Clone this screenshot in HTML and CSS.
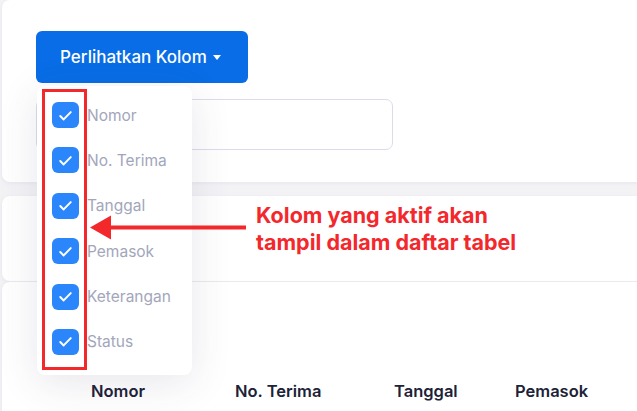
FILE: index.html
```html
<!DOCTYPE html>
<html lang="id">
<head>
    <meta charset="UTF-8">
    <meta name="viewport" content="width=device-width, initial-scale=1.0">
    <title>Penerimaan Barang</title>
    <link rel="stylesheet" href="styles.css">
</head>
<body>

<div class="page">
    <!-- filter card -->
    <div class="card card-filter">
        <button class="btn-columns">Perlihatkan Kolom <span class="caret"></span></button>
        <div class="search-row">
            <div class="search-box"></div>
        </div>
    </div>

    <div class="card card-tools"></div>

    <div class="card card-table">
        <div class="table-head">
            <span class="th th-nomor">Nomor</span>
            <span class="th th-terima">No. Terima</span>
            <span class="th th-tanggal">Tanggal</span>
            <span class="th th-pemasok">Pemasok</span>
        </div>
    </div>

    <!-- dropdown kolom -->
    <div class="column-menu">
        <label class="column-item"><span class="check"><svg viewBox="0 0 16 16"><path d="M4 8.4l2.6 2.6L12 5.4"/></svg></span>Nomor</label>
        <label class="column-item"><span class="check"><svg viewBox="0 0 16 16"><path d="M4 8.4l2.6 2.6L12 5.4"/></svg></span>No. Terima</label>
        <label class="column-item"><span class="check"><svg viewBox="0 0 16 16"><path d="M4 8.4l2.6 2.6L12 5.4"/></svg></span>Tanggal</label>
        <label class="column-item"><span class="check"><svg viewBox="0 0 16 16"><path d="M4 8.4l2.6 2.6L12 5.4"/></svg></span>Pemasok</label>
        <label class="column-item"><span class="check"><svg viewBox="0 0 16 16"><path d="M4 8.4l2.6 2.6L12 5.4"/></svg></span>Keterangan</label>
        <label class="column-item"><span class="check"><svg viewBox="0 0 16 16"><path d="M4 8.4l2.6 2.6L12 5.4"/></svg></span>Status</label>
    </div>

    <!-- annotation -->
    <div class="mark-box"></div>
    <svg class="mark-arrow" viewBox="0 0 156 25">
        <path d="M18 12.5H156" />
        <polygon points="0,12.5 21,0.5 21,24.5" />
    </svg>
    <p class="mark-text">Kolom yang aktif akan<br>tampil dalam daftar tabel</p>
</div>

</body>
</html>
```

FILE: styles.css
```css
body {
    margin: 0;
    padding: 0;
    background-color: #f3f3f6;
    font-family: 'Inter', 'Noto Sans', sans-serif;
    overflow: hidden;
}
.page {
    position: relative;
    width: 637px;
    height: 411px;
    padding-left: 2px;
    box-sizing: border-box;
}
.card {
    background-color: #fff;
    border-radius: 8px;
    margin-right: -20px;
    box-shadow: 0 1px 4px rgba(40, 40, 70, 0.06);
}
.card-filter {
    height: 182px;
    padding: 31px 0 0 34px;
    box-sizing: border-box;
}
.btn-columns {
    display: flex;
    align-items: center;
    gap: 6px;
    width: 212px;
    height: 52px;
    padding: 0 0 0 24px;
    border: none;
    border-radius: 6px;
    background-color: #086de6;
    color: #fff;
    font-family: inherit;
    font-size: 17px;
    font-weight: 500;
}
.caret {
    width: 0;
    height: 0;
    border-left: 4.5px solid transparent;
    border-right: 4.5px solid transparent;
    border-top: 5px solid #fff;
    margin-top: 1px;
}
.search-row {
    margin-top: 16px;
}
.search-box {
    width: 357px;
    height: 51px;
    border: 1px solid #dddbeb;
    border-radius: 7px;
    box-sizing: border-box;
}
.card-tools {
    margin-top: 14px;
    height: 85px;
}
.card-table {
    margin-top: 1px;
    height: 140px;
    padding-top: 97px;
    box-sizing: border-box;
}
.table-head {
    position: relative;
    height: 24px;
    font-size: 16.5px;
    font-weight: 600;
    color: #1c2238;
}
.th {
    position: absolute;
    top: 2px;
}
.th-nomor { left: 89px; }
.th-terima { left: 233px; }
.th-tanggal { left: 392px; }
.th-pemasok { left: 513px; }

.column-menu {
    position: absolute;
    left: 37px;
    top: 86px;
    width: 155px;
    height: 289px;
    padding: 16px 0 0 15px;
    box-sizing: border-box;
    background-color: #fff;
    border-radius: 8px;
    box-shadow: 0 8px 40px rgba(60, 60, 100, 0.12);
    display: flex;
    flex-direction: column;
    gap: 19.4px;
}
.column-item {
    display: flex;
    align-items: center;
    gap: 8px;
    height: 26px;
    font-size: 15.5px;
    color: #a2a6bb;
}
.check {
    width: 27px;
    height: 26px;
    border-radius: 6px;
    background-color: #2b86fb;
    display: flex;
    align-items: center;
    justify-content: center;
    flex-shrink: 0;
}
.check svg {
    width: 21px;
    height: 21px;
    fill: none;
    stroke: #fff;
    stroke-width: 1.5;
    stroke-linecap: round;
    stroke-linejoin: round;
}
.mark-box {
    position: absolute;
    left: 42px;
    top: 89px;
    width: 45px;
    height: 281px;
    border: 3px solid #f2282b;
    box-sizing: border-box;
}
.mark-arrow {
    position: absolute;
    left: 90px;
    top: 215px;
    width: 156px;
    height: 25px;
    fill: #f2282b;
    stroke: #f2282b;
}
.mark-arrow path {
    stroke-width: 4;
}
.mark-arrow polygon {
    stroke: none;
}
.mark-text {
    position: absolute;
    left: 256px;
    top: 202px;
    margin: 0;
    font-size: 21.5px;
    font-weight: 700;
    line-height: 27px;
    color: #f3282d;
    text-shadow: 0 0 3px rgba(255, 255, 255, 0.9);
}
```
